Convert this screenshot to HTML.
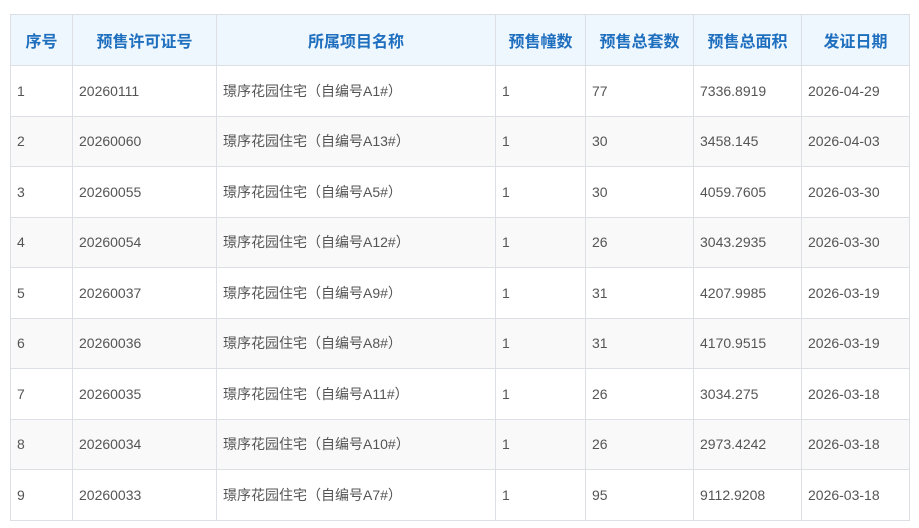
<!DOCTYPE html>
<html><head><meta charset="utf-8"><style>
body{margin:0;background:#fff;font-family:"Liberation Sans","Noto Sans CJK SC",sans-serif;}
table{position:absolute;left:10px;top:14px;border-collapse:collapse;table-layout:fixed;width:900px;}
td,th{border:1px solid #dcdfe3;padding:0 0 0 6px;font-size:14px;color:#555;text-align:left;height:49.5px;white-space:nowrap;overflow:hidden}
th{background:#eef6fe;color:#1f6fbf;font-size:16px;font-weight:bold;text-align:center;padding:0;height:50px}
tr:nth-child(odd) td{background:#f9f9f9}
</style></head><body>
<table>
<colgroup><col style="width:62px"><col style="width:144px"><col style="width:279px"><col style="width:90px"><col style="width:108px"><col style="width:108px"><col style="width:108px"></colgroup>
<tr><th>序号</th><th>预售许可证号</th><th>所属项目名称</th><th>预售幢数</th><th>预售总套数</th><th>预售总面积</th><th>发证日期</th></tr>
<tr><td>1</td><td>20260111</td><td>璟序花园住宅（自编号A1#）</td><td>1</td><td>77</td><td>7336.8919</td><td>2026-04-29</td></tr>
<tr><td>2</td><td>20260060</td><td>璟序花园住宅（自编号A13#）</td><td>1</td><td>30</td><td>3458.145</td><td>2026-04-03</td></tr>
<tr><td>3</td><td>20260055</td><td>璟序花园住宅（自编号A5#）</td><td>1</td><td>30</td><td>4059.7605</td><td>2026-03-30</td></tr>
<tr><td>4</td><td>20260054</td><td>璟序花园住宅（自编号A12#）</td><td>1</td><td>26</td><td>3043.2935</td><td>2026-03-30</td></tr>
<tr><td>5</td><td>20260037</td><td>璟序花园住宅（自编号A9#）</td><td>1</td><td>31</td><td>4207.9985</td><td>2026-03-19</td></tr>
<tr><td>6</td><td>20260036</td><td>璟序花园住宅（自编号A8#）</td><td>1</td><td>31</td><td>4170.9515</td><td>2026-03-19</td></tr>
<tr><td>7</td><td>20260035</td><td>璟序花园住宅（自编号A11#）</td><td>1</td><td>26</td><td>3034.275</td><td>2026-03-18</td></tr>
<tr><td>8</td><td>20260034</td><td>璟序花园住宅（自编号A10#）</td><td>1</td><td>26</td><td>2973.4242</td><td>2026-03-18</td></tr>
<tr><td>9</td><td>20260033</td><td>璟序花园住宅（自编号A7#）</td><td>1</td><td>95</td><td>9112.9208</td><td>2026-03-18</td></tr>
</table>
</body></html>
